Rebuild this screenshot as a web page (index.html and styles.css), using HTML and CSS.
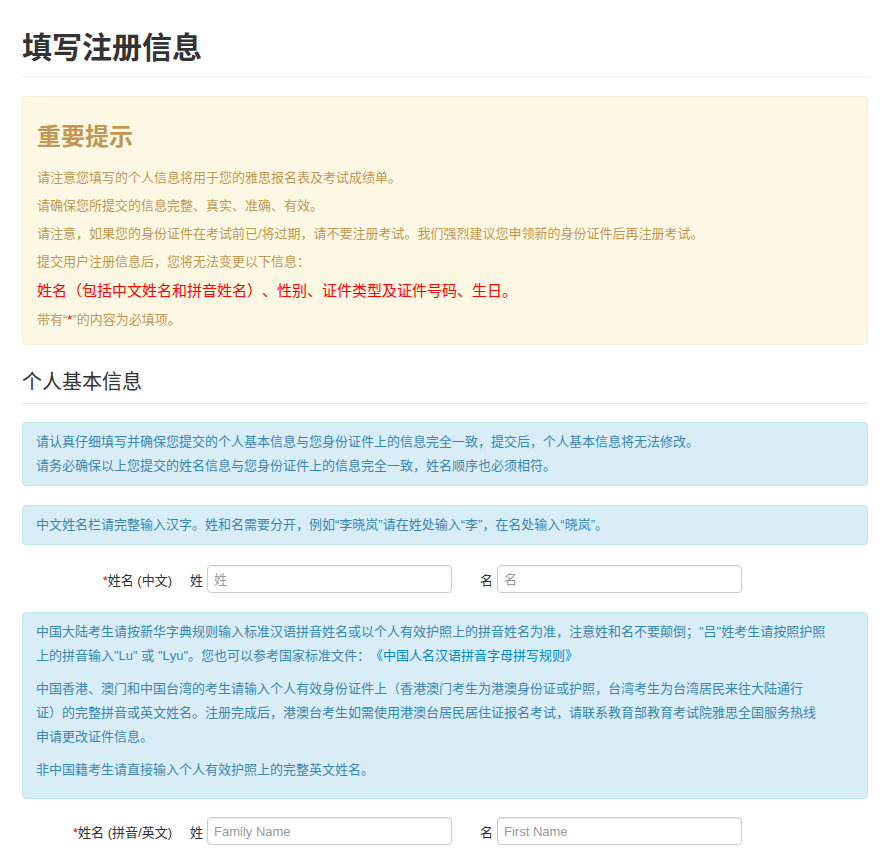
FILE: index.html
```html
<!DOCTYPE html>
<html lang="zh-CN">
<head>
<meta charset="utf-8">
<title>填写注册信息</title>
<link rel="stylesheet" href="styles.css">
</head>
<body>
<div class="container">
  <h1 class="page-title">填写注册信息</h1>

  <div class="alert alert-warning">
    <h3 class="alert-heading">重要提示</h3>
    <p>请注意您填写的个人信息将用于您的雅思报名表及考试成绩单。</p>
    <p>请确保您所提交的信息完整、真实、准确、有效。</p>
    <p>请注意，如果您的身份证件在考试前已/将过期，请不要注册考试。我们强烈建议您申领新的身份证件后再注册考试。</p>
    <p>提交用户注册信息后，您将无法变更以下信息：</p>
    <p class="danger">姓名（包括中文姓名和拼音姓名）、性别、证件类型及证件号码、生日。</p>
    <p>带有“<span class="req">*</span>”的内容为必填项。</p>
  </div>

  <h2 class="section-title">个人基本信息</h2>

  <div class="alert alert-info first">
    <div>请认真仔细填写并确保您提交的个人基本信息与您身份证件上的信息完全一致，提交后，个人基本信息将无法修改。</div>
    <div>请务必确保以上您提交的姓名信息与您身份证件上的信息完全一致，姓名顺序也必须相符。</div>
  </div>

  <div class="alert alert-info">
    <div>中文姓名栏请完整输入汉字。姓和名需要分开，例如“李晓岚”请在姓处输入“李”，在名处输入“晓岚”。</div>
  </div>

  <div class="form-row">
    <label class="row-label"><span class="req">*</span>姓名 (中文)</label>
    <div class="name-part">
      <span class="part-label">姓</span>
      <input class="text-input" type="text" placeholder="姓">
    </div>
    <div class="name-part second">
      <span class="part-label">名</span>
      <input class="text-input" type="text" placeholder="名">
    </div>
  </div>

  <div class="alert alert-info paras">
    <p>中国大陆考生请按新华字典规则输入标准汉语拼音姓名或以个人有效护照上的拼音姓名为准，注意姓和名不要颠倒；"吕"姓考生请按照护照上的拼音输入"Lu" 或 "Lyu"。您也可以参考国家标准文件：<a class="doc-link" href="#">《中国人名汉语拼音字母拼写规则》</a></p>
    <p>中国香港、澳门和中国台湾的考生请输入个人有效身份证件上（香港澳门考生为港澳身份证或护照，台湾考生为台湾居民来往大陆通行证）的完整拼音或英文姓名。注册完成后，港澳台考生如需使用港澳台居民居住证报名考试，请联系教育部教育考试院雅思全国服务热线申请更改证件信息。</p>
    <p>非中国籍考生请直接输入个人有效护照上的完整英文姓名。</p>
  </div>

  <div class="form-row last">
    <label class="row-label"><span class="req">*</span>姓名 (拼音/英文)</label>
    <div class="name-part">
      <span class="part-label">姓</span>
      <input class="text-input latin" type="text" placeholder="Family Name">
    </div>
    <div class="name-part second">
      <span class="part-label">名</span>
      <input class="text-input latin" type="text" placeholder="First Name">
    </div>
  </div>
</div>
</body>
</html>
```

FILE: styles.css
```css
html, body {
  margin: 0;
  padding: 0;
  background: #fff;
}

body {
  font-family: "Liberation Sans", "Noto Sans CJK SC", sans-serif;
  font-size: 13px;
  color: #333;
  text-spacing-trim: space-all;
  font-kerning: none;
}

.container {
  width: 846px;
  margin-left: 22px;
}

.page-title {
  margin: 28px 0 0;
  padding-bottom: 8px;
  font-size: 30px;
  line-height: 40px;
  font-weight: bold;
  color: #333;
  border-bottom: 1px solid #eee;
}

.alert {
  border-radius: 4px;
}

.alert-warning {
  margin-top: 19px;
  padding: 15px 35px 5px 14px;
  background: #fcf8e3;
  border: 1px solid #fbeed5;
  color: #c09853;
}

.alert-heading {
  margin: 10px 0 17px;
  font-size: 24px;
  line-height: 30px;
  font-weight: bold;
  color: #c09853;
}

.alert-warning p {
  margin: 0 0 10px;
  line-height: 18px;
}

.alert-warning p.danger {
  font-size: 15px;
  line-height: 20px;
  color: #f00;
}

.req {
  color: #f00;
}

.section-title {
  margin: 24px 0 0;
  padding-bottom: 8px;
  font-size: 20px;
  line-height: 26px;
  font-weight: normal;
  color: #333;
  border-bottom: 1px solid #e5e5e5;
}

.alert-info {
  margin-top: 19px;
  padding: 7px 40px 7px 13px;
  background: #d9edf7;
  border: 1px solid #bce8f1;
  color: #3a87ad;
  line-height: 24px;
}

.alert-info.first {
  margin-top: 18px;
}

.alert-info.paras p {
  margin: 0 0 9px;
}

.doc-link {
  color: #0088cc;
  text-decoration: none;
}

.form-row {
  display: flex;
  align-items: center;
  margin-top: 20px;
  height: 28px;
}

.form-row.last {
  margin-top: 18px;
}

.row-label {
  width: 150px;
  margin-right: 18px;
  text-align: right;
  color: #333;
}

.name-part {
  display: flex;
  align-items: center;
}

.name-part.second {
  margin-left: 28px;
}

.part-label {
  margin-right: 4px;
  color: #333;
}

.text-input {
  box-sizing: border-box;
  width: 245px;
  height: 28px;
  margin: 0;
  padding: 4px 6px;
  border: 1px solid #ccc;
  border-radius: 4px;
  background: #fff;
  font-family: "Liberation Sans", "Noto Sans CJK SC", sans-serif;
  font-size: 13px;
  color: #555;
  box-shadow: inset 0 1px 1px rgba(0, 0, 0, 0.075);
}

.text-input::placeholder {
  color: #999;
}

.text-input.latin {
  font-size: 13px;
}
```
